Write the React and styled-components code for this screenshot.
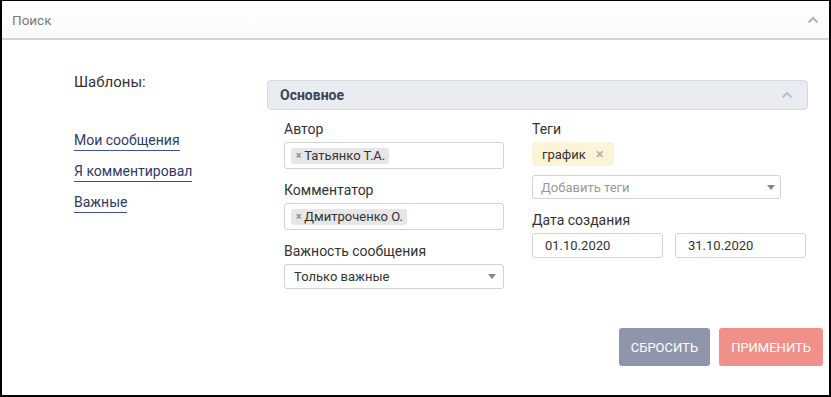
import styled, { createGlobalStyle } from "styled-components";

const Global = createGlobalStyle`
  html, body {
    margin: 0;
    padding: 0;
    background: #fff;
  }
  body {
    font-family: Roboto, "Liberation Sans", Arial, sans-serif;
    color: #333;
  }
`;

const Frame = styled.div`
  box-sizing: border-box;
  width: 831px;
  height: 397px;
  border-style: solid;
  border-color: #000;
  border-width: 1px 2px 2px 2px;
  display: flex;
  flex-direction: column;
`;

const Header = styled.div`
  height: 37px;
  display: flex;
  align-items: center;
  justify-content: space-between;
  padding: 0 10px 0 10px;
  background: linear-gradient(#fff, #fafafa);
  border-bottom: 2px solid #d3d3da;
`;

const HeaderTitle = styled.span`
  font-size: 13.5px;
  color: #7a7a7a;
`;

const Body = styled.div`
  flex: 1;
  display: flex;
  flex-direction: column;
  padding: 32px 6px 29px 72px;
`;

const Main = styled.div`
  display: flex;
`;

const Templates = styled.div`
  width: 193px;
  display: flex;
  flex-direction: column;
  align-items: flex-start;
`;

const TemplatesTitle = styled.div`
  font-size: 15px;
  line-height: 20px;
  color: #333;
  margin-bottom: 40px;
`;

const TemplateLink = styled.a`
  font-size: 14px;
  line-height: 17px;
  color: #2f3a66;
  text-decoration: none;
  border-bottom: 1.5px solid #3d4f9c;
  padding-bottom: 1px;
  margin-bottom: 12px;
  cursor: pointer;
`;

const Section = styled.div`
  width: 541px;
  margin-top: 8px;
`;

const SectionHead = styled.div`
  box-sizing: border-box;
  height: 30px;
  display: flex;
  align-items: center;
  justify-content: space-between;
  padding: 0 14px 0 12px;
  background: #e9ecf0;
  border: 1px solid #d6dae0;
  border-radius: 4px;
`;

const SectionTitle = styled.span`
  font-size: 14px;
  font-weight: 700;
  color: #3b4256;
`;

const Fields = styled.div`
  display: grid;
  grid-template-columns: 220px 274px;
  column-gap: 28px;
  padding: 9px 0 0 17px;
`;

const Column = styled.div`
  display: flex;
  flex-direction: column;
`;

const Label = styled.div`
  font-size: 14px;
  line-height: 20px;
  color: #333;
  margin-top: ${(p) => p.$gap || 0}px;
  margin-bottom: 3px;
`;

const Box = styled.div`
  box-sizing: border-box;
  height: ${(p) => p.$h || 27}px;
  width: ${(p) => (p.$w ? `${p.$w}px` : "100%")};
  display: flex;
  align-items: center;
  justify-content: space-between;
  padding: 0 ${(p) => p.$pr || 10}px 0 ${(p) => p.$pl || 10}px;
  border: 1px solid #d2d2d2;
  border-radius: 3px;
  background: #fff;
  font-size: 13px;
  color: ${(p) => (p.$muted ? "#999" : "#333")};
`;

const Chip = styled.span`
  display: inline-flex;
  align-items: center;
  gap: 3px;
  height: 16px;
  padding: 0 4px 0 5px;
  background: #e6e6e6;
  border-radius: 3px;
  font-size: 13px;
  color: #333;
`;

const ChipX = styled.span`
  font-size: 10px;
  font-weight: 700;
  color: #888;
`;

const Caret = styled.span`
  width: 0;
  height: 0;
  border-left: 4px solid transparent;
  border-right: 4px solid transparent;
  border-top: 5px solid #888;
`;

const TagRow = styled.div`
  display: flex;
  margin-bottom: 9px;
`;

const Tag = styled.span`
  display: inline-flex;
  align-items: center;
  gap: 10px;
  height: 24px;
  padding: 0 10px;
  background: #fdf3d8;
  border-radius: 4px;
  font-size: 13px;
  color: #333;
`;

const TagX = styled.span`
  font-size: 15px;
  color: #aaa;
`;

const Dates = styled.div`
  display: flex;
  gap: 12px;
`;

const Actions = styled.div`
  display: flex;
  justify-content: flex-end;
  gap: 9px;
  margin-top: auto;
`;

const Button = styled.button`
  height: 38px;
  padding: 0 12px;
  border: none;
  border-radius: 3px;
  background: ${(p) => p.$bg};
  color: #fff;
  font-family: inherit;
  font-size: 13px;
  text-transform: uppercase;
  cursor: pointer;
`;

const Chevron = ({ color = "#a9b1c7" }) => (
  <svg width="12" height="8" viewBox="0 0 12 8">
    <path d="M1.5 6.5 L6 2 L10.5 6.5" fill="none" stroke={color} strokeWidth="2" />
  </svg>
);

export default function App() {
  return (
    <>
      <Global />
      <Frame>
        <Header>
          <HeaderTitle>Поиск</HeaderTitle>
          <Chevron />
        </Header>
        <Body>
          <Main>
            <Templates>
              <TemplatesTitle>Шаблоны:</TemplatesTitle>
              <TemplateLink>Мои сообщения</TemplateLink>
              <TemplateLink>Я комментировал</TemplateLink>
              <TemplateLink>Важные</TemplateLink>
            </Templates>
            <Section>
              <SectionHead>
                <SectionTitle>Основное</SectionTitle>
                <Chevron color="#b8bfd0" />
              </SectionHead>
              <Fields>
                <Column>
                  <Label>Автор</Label>
                  <Box $pl={6}>
                    <Chip>
                      <ChipX>×</ChipX>Татьянко Т.А.
                    </Chip>
                  </Box>
                  <Label $gap={11}>Комментатор</Label>
                  <Box $pl={6}>
                    <Chip>
                      <ChipX>×</ChipX>Дмитроченко О.
                    </Chip>
                  </Box>
                  <Label $gap={11}>Важность сообщения</Label>
                  <Box $h={25} $pl={9} $pr={7}>
                    Только важные
                    <Caret />
                  </Box>
                </Column>
                <Column>
                  <Label>Теги</Label>
                  <TagRow>
                    <Tag>
                      график<TagX>×</TagX>
                    </Tag>
                  </TagRow>
                  <Box $h={24} $w={249} $pl={8} $pr={5} $muted>
                    Добавить теги
                    <Caret />
                  </Box>
                  <Label $gap={11}>Дата создания</Label>
                  <Dates>
                    <Box $h={25} $w={131} $pl={12}>01.10.2020</Box>
                    <Box $h={25} $w={131} $pl={12}>31.10.2020</Box>
                  </Dates>
                </Column>
              </Fields>
            </Section>
          </Main>
          <Actions>
            <Button $bg="#8f96ac">Сбросить</Button>
            <Button $bg="#f0908a">Применить</Button>
          </Actions>
        </Body>
      </Frame>
    </>
  );
}
